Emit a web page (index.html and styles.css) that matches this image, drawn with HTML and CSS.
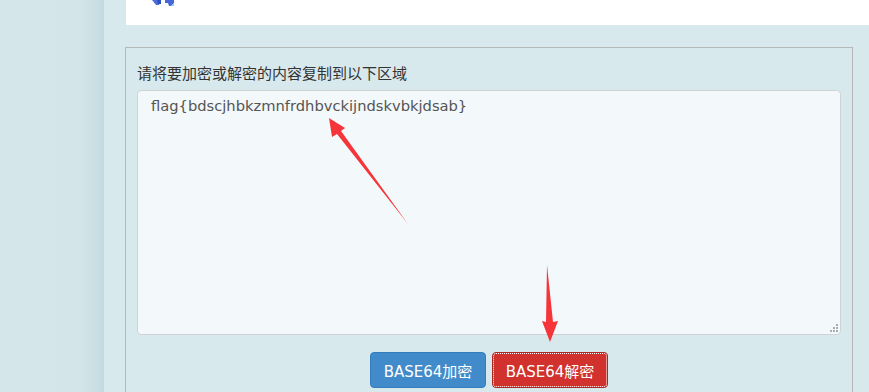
FILE: index.html
```html
<!DOCTYPE html>
<html lang="zh-CN">
<head>
    <meta charset="UTF-8">
    <meta name="viewport" content="width=device-width, initial-scale=1.0">
    <title>BASE64加密解密</title>
    <link rel="stylesheet" href="styles.css">
</head>
<body>
    <div class="page">
        <div class="sidebar"></div>

        <div class="main">
            <div class="top-panel">
                <svg class="logo" width="24" height="7" viewBox="0 0 24 7">
                    <path d="M0 0h9l-2 5h-3z" fill="#4b6fd6"/>
                    <path d="M5 0h4v4h-3z" fill="#2f4fc4"/>
                    <path d="M13 0h9v3l-3 3h-2l-1-3h-3z" fill="#4466d8"/>
                    <rect x="20" y="4" width="2" height="2" fill="#8fd0f0"/>
                </svg>
            </div>

            <fieldset class="box">
                <div class="box-label">请将要加密或解密的内容复制到以下区域</div>
                <div class="content-wrap">
                    <textarea class="content" spellcheck="false">flag{bdscjhbkzmnfrdhbvckijndskvbkjdsab}</textarea>
                    <span class="grip"></span>
                </div>
                <div class="actions">
                    <button class="btn btn-blue">BASE64加密</button>
                    <button class="btn btn-red">BASE64解密</button>
                </div>
            </fieldset>
        </div>
    </div>

    <!-- red annotation arrows -->
    <svg class="marks" width="869" height="392" viewBox="0 0 869 392">
        <polygon points="329,118 345,128 341,131 408,224 337,134 332,137" fill="#f5353a"/>
        <polygon points="547,265 553,322 558,321 550,342 542,321 546,322" fill="#f5353a"/>
    </svg>
</body>
</html>
```

FILE: styles.css
```css
* {
    margin: 0;
    padding: 0;
    box-sizing: border-box;
}

html {
    overflow: hidden;
}

body {
    font-family: 'DejaVu Sans', 'Noto Sans CJK SC', sans-serif;
    background: #d6e8ec;
    color: #333;
    height: 392px;
    overflow: hidden;
    position: relative;
}

.page {
    display: flex;
    height: 100%;
    overflow: hidden;
}

.sidebar {
    width: 104px;
    flex-shrink: 0;
    background: linear-gradient(to right, #d4e6ea 0%, #d3e5e9 78%, #c9dee3 94%, #c2d9df 100%);
}

.main {
    flex: 1;
    padding-left: 21px;
    background: #d7e9ed;
}

.top-panel {
    height: 25px;
    margin-left: 1px;
    background: #fff;
    padding-left: 26px;
}

.logo {
    display: block;
}

.box {
    margin-top: 22px;
    width: 728px;
    border: 1px solid #b4b8b9;
    padding: 15px 11px 0;
    height: 360px;
}

.box-label {
    font-family: 'Noto Sans CJK SC', sans-serif;
    font-size: 15px;
    line-height: 20px;
    color: #333;
    margin-bottom: 7px;
}

.content-wrap {
    position: relative;
}

.content {
    display: block;
    width: 100%;
    height: 245px;
    background: #f3f8fb;
    border: 1px solid #cfd3d5;
    border-radius: 4px;
    padding: 5px 13px;
    font-family: 'DejaVu Sans', sans-serif;
    font-size: 14.7px;
    line-height: 20px;
    color: #555;
    resize: none;
    outline: none;
}

.grip {
    position: absolute;
    right: 3px;
    bottom: 3px;
    width: 8px;
    height: 8px;
    background:
        linear-gradient(#a9adaf, #a9adaf) 6px 0 / 2px 2px no-repeat,
        linear-gradient(#a9adaf, #a9adaf) 3px 3px / 2px 2px no-repeat,
        linear-gradient(#a9adaf, #a9adaf) 6px 3px / 2px 2px no-repeat,
        linear-gradient(#a9adaf, #a9adaf) 0 6px / 2px 2px no-repeat,
        linear-gradient(#a9adaf, #a9adaf) 3px 6px / 2px 2px no-repeat,
        linear-gradient(#a9adaf, #a9adaf) 6px 6px / 2px 2px no-repeat;
}

.actions {
    display: flex;
    justify-content: center;
    gap: 6px;
    margin-top: 17px;
}

.btn {
    width: 116px;
    height: 36px;
    border-radius: 4px;
    border: 1px solid;
    color: #fff;
    font-family: 'DejaVu Sans', 'Noto Sans CJK SC', sans-serif;
    font-size: 15px;
}

.btn-blue {
    background: #428bca;
    border-color: #357ebd;
}

.btn-red {
    background: #d2322d;
    border-color: #ac2925;
    outline: 1px dotted #fff;
    outline-offset: -2px;
}

.marks {
    position: absolute;
    top: 0;
    left: 0;
    pointer-events: none;
}
```
